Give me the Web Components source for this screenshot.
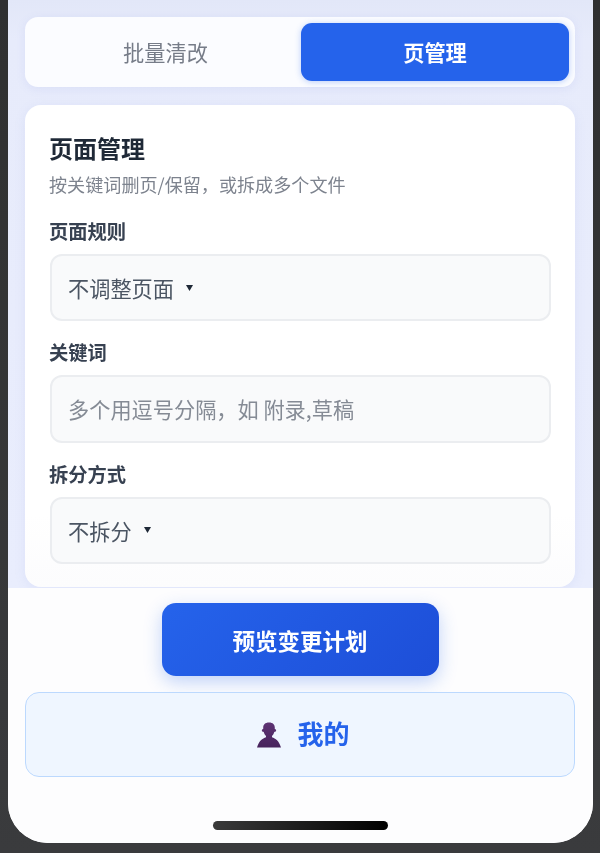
<!DOCTYPE html>
<html lang="zh"><head><meta charset="utf-8"><title>页管理</title>
<style>
html,body{margin:0;padding:0;height:853px;overflow:hidden;background:#38393b;font-family:"Noto Sans CJK SC","Noto Sans",sans-serif}
</style></head><body>
<phone-frame>
  <tab-bar slot="main">
    <tab-item>批量清改</tab-item>
    <tab-item active>页管理</tab-item>
  </tab-bar>
  <form-card slot="main" heading="页面管理" sub="按关键词删页/保留，或拆成多个文件">
    <form-field label="页面规则"><select-box>不调整页面</select-box></form-field>
    <form-field label="关键词"><text-box>多个用逗号分隔，如 附录,草稿</text-box></form-field>
    <form-field label="拆分方式"><select-box>不拆分</select-box></form-field>
  </form-card>
  <primary-button slot="foot">预览变更计划</primary-button>
  <mine-button slot="foot">我的</mine-button>
</phone-frame>
<script>
function def(name,html,init){
  customElements.define(name,class extends HTMLElement{
    constructor(){super();this.attachShadow({mode:"open"}).innerHTML=html;}
    connectedCallback(){if(init)init(this,this.shadowRoot);}
  });
}
def("phone-frame",`<style>
:host{display:block;box-sizing:border-box;width:600px;height:853px;padding:0 7px 10px 8px;background:linear-gradient(180deg,#2f3031,#3a3b3d);filter:blur(.5px)}
.screen{height:843px;display:flex;flex-direction:column;background:#fff;border-radius:0 0 40px 40px;overflow:hidden}
.main{height:588px;flex:none;box-sizing:border-box;padding:17px 18px 0 17px;overflow:hidden;display:flex;flex-direction:column;gap:18px;background:linear-gradient(180deg,#e2e7f8 0,#e7ebfb 40px,#e9edfd 100%)}
.foot{flex:1;background:#fdfdfe;display:flex;flex-direction:column;align-items:stretch;padding:15px 18px 0 17px;gap:16px;position:relative}
.home{margin:auto auto 13px;width:175px;height:9px;border-radius:5px;background:linear-gradient(90deg,#3a3a3a,#000)}
</style><div class="screen"><div class="main"><slot name="main"></slot></div><div class="foot"><slot name="foot"></slot><div class="home"></div></div></div>`);
def("tab-bar",`<style>
:host{display:flex;box-sizing:border-box;height:70px;padding:6px;gap:2px;background:#fbfcff;border-radius:13px;box-shadow:0 2px 10px rgba(120,140,220,.12)}
</style><slot></slot>`);
def("tab-item",`<style>
:host{flex:1;display:flex;align-items:center;justify-content:center;font-size:21.2px;color:#767c88;border-radius:11px;line-height:1;text-indent:1px}
:host([active]){background:#2563eb;color:#fff;font-weight:700;box-shadow:0 1px 6px rgba(37,99,235,.3);text-indent:0}
</style><slot></slot>`);
def("form-card",`<style>
:host{display:block;box-sizing:border-box;height:482px;flex:none;background:linear-gradient(180deg,#fff 85%,#fcfcfd);border-radius:16px;padding:26px 24px 0 25px;box-shadow:0 2px 12px rgba(120,140,220,.1)}
h2{margin:0 0 0 -1px;font-size:24px;line-height:34px;font-weight:700;color:#1f2937}
p{margin:6px 0 20px -1px;font-size:18.1px;line-height:26px;color:#7d838e}
</style><h2></h2><p></p><slot></slot>`,(el,s)=>{s.querySelector("h2").textContent=el.getAttribute("heading");s.querySelector("p").textContent=el.getAttribute("sub");});
def("form-field",`<style>
:host{display:block}
.l{font-size:19.3px;line-height:28px;font-weight:700;color:#374151;margin:0 0 9px -1px}
</style><div class="l"></div><slot></slot>`,(el,s)=>{s.querySelector(".l").textContent=el.getAttribute("label");});
def("select-box",`<style>
:host{display:flex;align-items:center;box-sizing:border-box;height:67px;padding:0 16px;background:#f9fafb;border:2px solid #ebedf0;border-radius:12px;font-size:21.2px;color:#4b5563;margin-bottom:16.5px}
svg{margin-left:12px;width:7px;height:6px}
</style><slot></slot><svg viewBox="0 0 7 6"><path d="M0 0H7L3.5 6Z" fill="#1f2937"/></svg>`);
def("text-box",`<style>
:host{display:flex;align-items:center;box-sizing:border-box;height:68.5px;padding:0 16px;background:#f9fafb;border:2px solid #ebedf0;border-radius:12px;font-size:21.2px;color:#858b95;margin-bottom:16.5px}
</style><slot></slot>`);
def("primary-button",`<style>
:host{display:flex;align-self:center;align-items:center;justify-content:center;width:277px;height:73px;box-sizing:border-box;border-radius:14px;background:linear-gradient(135deg,#2563eb,#1d4ed8);color:#fff;font-size:22.5px;font-weight:700;box-shadow:0 6px 18px rgba(37,99,235,.28)}
</style><slot></slot>`);
def("mine-button",`<style>
:host{display:flex;align-items:center;justify-content:center;gap:15px;box-sizing:border-box;height:85px;padding:0 0 4px 6px;background:#eff6ff;border:1px solid #bcd9fe;border-radius:14px;color:#2563eb;font-size:26px;font-weight:700}
svg{width:26px;height:26px;flex:none;margin-top:4px}
</style><svg viewBox="0 0 26 26"><defs><linearGradient id="g" x1="0" y1="0" x2="0" y2="1"><stop offset="0" stop-color="#5d3373"/><stop offset="1" stop-color="#47235c"/></linearGradient></defs><path d="M13 .5C9 .5 7.200 2.800 7.200 5.600V7C6 7.300 5.700 8 5.900 8.700C6.200 9.500 7 9.900 7.700 9.900C8.200 11.600 9.200 13.200 10 13.900V15.200C6.500 16.500 3 18.500 1 25.500H25C23 18.500 19.500 16.500 16 15.200V13.900C16.800 13.200 17.800 11.600 18.300 9.900C19 9.900 19.800 9.500 20.100 8.700C20.300 8 20 7.300 18.800 7V5.600C18.800 2.800 17 .5 13 .5Z" fill="url(#g)"/></svg><slot></slot>`);
</script>
</body></html>
